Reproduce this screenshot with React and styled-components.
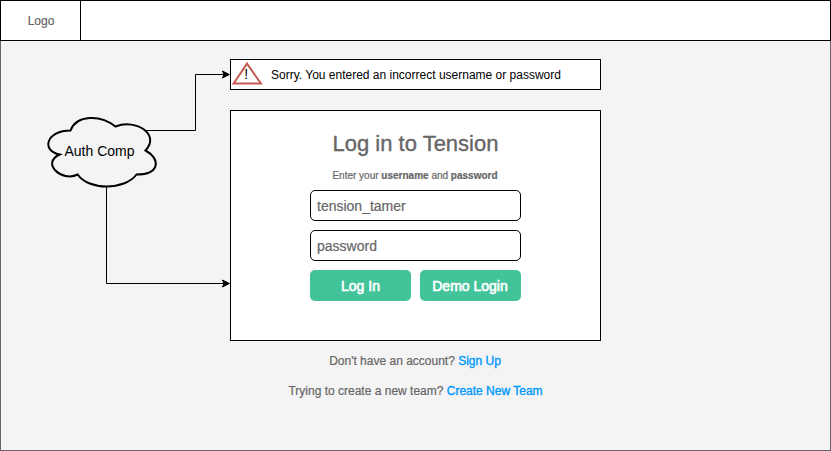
import React from 'react';
import styled, { createGlobalStyle } from 'styled-components';

const GlobalStyle = createGlobalStyle`
  * { box-sizing: border-box; }
  body { margin: 0; font-family: "Liberation Sans", Helvetica, Arial, sans-serif; }
`;

const Page = styled.div`
  position: relative;
  width: 831px;
  height: 451px;
  overflow: hidden;
  background: #f4f4f4;
  box-shadow: inset 0 0 0 1px #666;
  color: #666;
  -webkit-text-stroke: 0.2px currentColor;
`;

const Header = styled.header`
  display: flex;
  height: 41px;
  background: #fff;
  border: 1px solid #000;
`;

const Logo = styled.div`
  width: 80px;
  padding: 1px 0 0 1px;
  border-right: 1px solid #000;
  font-size: 12px;
  line-height: 39px;
  text-align: center;
`;

const Main = styled.main`
  display: flex;
  flex-direction: column;
  width: 371px;
  margin: 18px 0 0 230px;
`;

const Alert = styled.div`
  display: flex;
  align-items: center;
  height: 31px;
  border: 1px solid #000;
  background: #fff;
  color: #000;
  font-size: 12px;
  white-space: nowrap;
  -webkit-text-stroke: 0;
`;

const WarningIcon = styled.svg`
  width: 32px;
  height: 29px;
  margin-right: 8px;
`;

const Card = styled.form`
  display: flex;
  flex-direction: column;
  align-items: center;
  height: 231px;
  margin-top: 20px;
  border: 1px solid #000;
  background: #fff;
`;

const Title = styled.h1`
  margin: 19px 0 0;
  font-size: 22px;
  font-weight: 400;
  line-height: 27px;
  -webkit-text-stroke: 0.35px #666;
`;

const Hint = styled.p`
  margin: 12px 1px 0 0;
  font-size: 10px;
  line-height: 14px;
`;

const Fields = styled.div`
  display: grid;
  grid-template-columns: 101px 101px;
  gap: 9px;
  margin-top: 7px;
`;

const Field = styled.div`
  grid-column: 1 / -1;
  height: 31px;
  padding-left: 6px;
  border: 1px solid #000;
  border-radius: 5px;
  font-size: 14px;
  line-height: 30px;
`;

const Button = styled.button`
  height: 31px;
  padding: 1px ${(p) => p.$nudge || '0'} 0 0;
  border: 0;
  border-radius: 5px;
  background: #43c39a;
  color: #fff;
  font: 400 14px "Liberation Sans", Helvetica, Arial, sans-serif;
  -webkit-text-stroke: 0.6px #fff;
`;

const Prompt = styled.p`
  margin: ${(p) => p.$top} ${(p) => p.$right || '0'} 0 0;
  font-size: 12px;
  line-height: 16px;
  text-align: center;
`;

const Link = styled.a`
  color: #0099ff;
  -webkit-text-stroke: 0.35px #0099ff;
`;

const Diagram = styled.svg`
  position: absolute;
  inset: 0;
  pointer-events: none;
`;

const CloudLabel = styled.div`
  position: absolute;
  left: 39px;
  top: 143px;
  width: 121px;
  color: #000;
  font-size: 14px;
  line-height: 16px;
  text-align: center;
  -webkit-text-stroke: 0;
`;

function Connectors() {
  return (
    <Diagram width="831" height="451" viewBox="0 0 831 451" fill="none" stroke="#000">
      <path d="M146 130.5H195.5V74.5H225" />
      <path d="M106.5 186V283.5H225" />
      <path d="M229.4 74.5L222.4 78L224.1 74.5L222.4 71Z" fill="#000" />
      <path d="M229.4 283.5L222.4 287L224.1 283.5L222.4 280Z" fill="#000" />
      <path
        transform="translate(40.5 110.5)"
        strokeWidth="2"
        fill="#f4f4f4"
        d="M30 20C6 20 0 40 19.2 44C0 52.8 21.6 72 37.2 64C48 80 84 80 96 64C120 64 120 48 105 40C120 24 96 8 75 16C60 4 36 4 30 20Z"
      />
    </Diagram>
  );
}

export default function App() {
  return (
    <Page>
      <GlobalStyle />
      <Header>
        <Logo>Logo</Logo>
      </Header>
      <Main>
        <Alert>
          <WarningIcon viewBox="0 0 32 29">
            <path d="M2.6 23.5L16 3.6L29.9 23.5Z" fill="#fff" stroke="#c45a53" strokeWidth="2" />
            <text x="15.3" y="19" textAnchor="middle" fontSize="14" fill="#000">!</text>
          </WarningIcon>
          Sorry. You entered an incorrect username or password
        </Alert>
        <Card>
          <Title>Log in to Tension</Title>
          <Hint>
            Enter your <b>username</b> and <b>password</b>
          </Hint>
          <Fields>
            <Field>tension_tamer</Field>
            <Field>password</Field>
            <Button type="button">Log In</Button>
            <Button type="button" $nudge="1px">Demo Login</Button>
          </Fields>
        </Card>
        <Prompt $top="12px" $right="1px">
          Don't have an account? <Link>Sign Up</Link>
        </Prompt>
        <Prompt $top="14px">
          Trying to create a new team? <Link>Create New Team</Link>
        </Prompt>
      </Main>
      <Connectors />
      <CloudLabel>Auth Comp</CloudLabel>
    </Page>
  );
}
